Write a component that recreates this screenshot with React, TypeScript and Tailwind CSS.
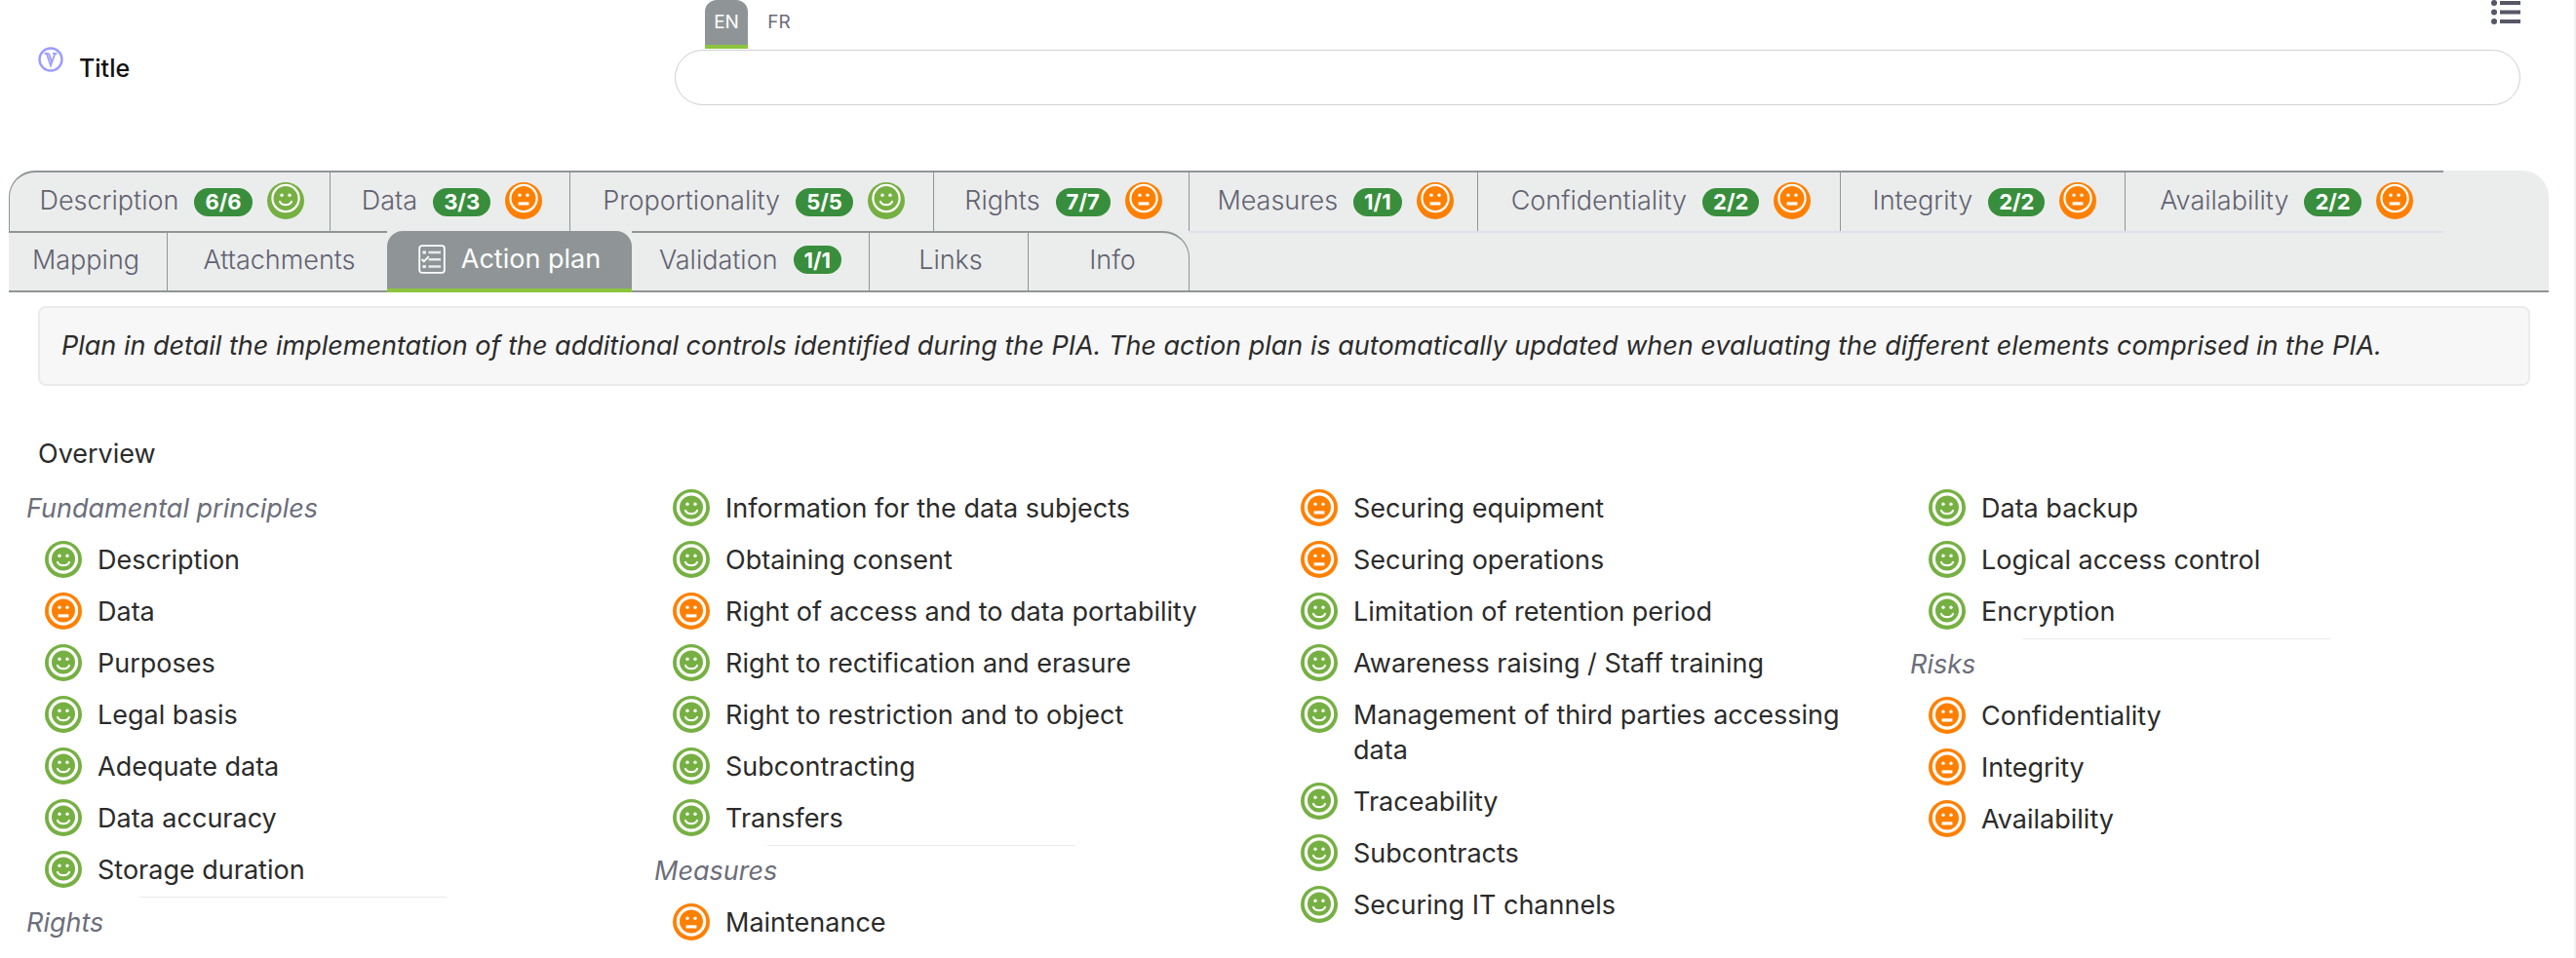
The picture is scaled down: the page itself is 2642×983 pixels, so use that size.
type Mood = "good" | "fair";

interface Tab {
  label: string;
  width: string;
  count?: string;
  mood?: Mood;
  edge?: string;
}

interface Entry {
  kind: "item" | "heading" | "rule";
  text?: string;
  mood?: Mood;
}

const good = (text: string): Entry => ({ kind: "item", text, mood: "good" });
const fair = (text: string): Entry => ({ kind: "item", text, mood: "fair" });
const heading = (text: string): Entry => ({ kind: "heading", text });
const rule: Entry = { kind: "rule" };

const firstRow: Tab[] = [
  { label: "Description", width: "w-[330px]", count: "6/6", mood: "good", edge: "rounded-tl-[27px] border-l" },
  { label: "Data", width: "w-[246px]", count: "3/3", mood: "fair" },
  { label: "Proportionality", width: "w-[373px]", count: "5/5", mood: "good" },
  { label: "Rights", width: "w-[262px]", count: "7/7", mood: "fair" },
  { label: "Measures", width: "w-[296px]", count: "1/1", mood: "fair" },
  { label: "Confidentiality", width: "w-[372px]", count: "2/2", mood: "fair" },
  { label: "Integrity", width: "w-[292px]", count: "2/2", mood: "fair" },
  { label: "Availability", width: "w-[326px]", count: "2/2", mood: "fair", edge: "border-r-0" },
];

const columns: Entry[][] = [
  [
    heading("Fundamental principles"),
    good("Description"),
    fair("Data"),
    good("Purposes"),
    good("Legal basis"),
    good("Adequate data"),
    good("Data accuracy"),
    good("Storage duration"),
    rule,
    heading("Rights"),
  ],
  [
    good("Information for the data subjects"),
    good("Obtaining consent"),
    fair("Right of access and to data portability"),
    good("Right to rectification and erasure"),
    good("Right to restriction and to object"),
    good("Subcontracting"),
    good("Transfers"),
    rule,
    heading("Measures"),
    fair("Maintenance"),
  ],
  [
    fair("Securing equipment"),
    fair("Securing operations"),
    good("Limitation of retention period"),
    good("Awareness raising / Staff training"),
    good("Management of third parties accessing data"),
    good("Traceability"),
    good("Subcontracts"),
    good("Securing IT channels"),
  ],
  [
    good("Data backup"),
    good("Logical access control"),
    good("Encryption"),
    rule,
    heading("Risks"),
    fair("Confidentiality"),
    fair("Integrity"),
    fair("Availability"),
  ],
];

function Face({ mood, thin = false }: { mood: Mood; thin?: boolean }) {
  const fill = mood === "good" ? "#76b043" : "#ff8000";
  const cy = thin ? 16.5 : 18.5;
  return (
    <svg viewBox="0 0 38 38" className="size-[38px] shrink-0" aria-hidden="true">
      <circle cx="19" cy="19" r="19" fill={fill} />
      <g transform={`translate(19 ${cy})`} fill="none" stroke="#fff">
        <circle r="13.6" strokeWidth={thin ? 2.2 : 3.2} />
        <circle cx="-4" cy="-3.2" r="1.7" fill="#fff" stroke="none" />
        <circle cx="4" cy="-3.2" r="1.7" fill="#fff" stroke="none" />
        {mood === "good" ? (
          <path d="M-6 3.4C-4 7.8 4 7.8 6 3.4" strokeWidth="2.2" strokeLinecap="round" />
        ) : (
          <path d="M-5.4 5.4H5.4" strokeWidth="3.2" />
        )}
      </g>
    </svg>
  );
}

function Count({ value }: { value: string }) {
  return (
    <span className="flex h-[29px] items-center rounded-full bg-[#388e3c] px-[11px] text-[22px] leading-none font-bold text-white">
      {value}
    </span>
  );
}

function TopTab({ tab }: { tab: Tab }) {
  return (
    <button
      type="button"
      role="tab"
      aria-selected={false}
      className={`flex h-[62px] items-center justify-center border-t-2 border-r border-[#909596] pl-1 ${tab.width} ${tab.edge ?? ""}`}
    >
      <span className="pb-[2px]">{tab.label}</span>
      {tab.count && (
        <span className="ml-4">
          <Count value={tab.count} />
        </span>
      )}
      {tab.mood && (
        <span className="ml-[15px] pb-[2px]">
          <Face mood={tab.mood} thin />
        </span>
      )}
    </button>
  );
}

const lowerTab = "flex h-[61px] items-center justify-center border-t-2 border-r border-[#909596] pb-1";

function ChecklistIcon() {
  return (
    <svg viewBox="0 0 28 30" className="h-[30px] w-7" fill="none" stroke="#fff" aria-hidden="true">
      <rect x="1.2" y="1.2" width="25.6" height="27.6" rx="2.5" strokeWidth="1.8" />
      <path d="M10.5 8H23M10.5 15.2H23M10.5 22.5H23" strokeWidth="2.6" strokeOpacity=".8" />
      <path d="M4.5 8h3.4M4.5 22.5h3.4" strokeWidth="3" strokeOpacity=".9" />
      <path d="M3.6 15l2.2 2.2 5-5" strokeWidth="1.8" />
    </svg>
  );
}

function ColumnEntry({ entry }: { entry: Entry }) {
  if (entry.kind === "rule") {
    return <li role="separator" className="ml-[18%] w-[49%] border-t border-[#e9eaeb]" />;
  }
  if (entry.kind === "heading") {
    return <li className="pt-2 pb-[9px] text-[#6c6e7a] italic">{entry.text}</li>;
  }
  return (
    <li className="flex items-start gap-4 pt-[6px] pr-6 pb-[9px] pl-[19px]">
      <span className="-mb-2">
        <Face mood={entry.mood ?? "good"} />
      </span>
      <span className="pt-[2px]">{entry.text}</span>
    </li>
  );
}

export default function App() {
  return (
    <div className="min-h-screen border-r-2 border-[#f0f0f0] bg-white font-['Inter',sans-serif] text-[27px] leading-9 text-[#2b2b2b]">
      <header className="flex items-start pl-[39px]">
        <label htmlFor="title" className="flex w-[653px] shrink-0 items-start gap-4 pt-12">
          <svg viewBox="0 0 26 26" className="size-[26px]" fill="none" stroke="#9c9cff" aria-hidden="true">
            <circle cx="13" cy="13" r="11.5" strokeWidth="2.4" />
            <path d="M6.5 6.8h4.6M15 6.8h4.6M8.8 7l4.2 12.2L17.4 7M11.2 7l3 9" strokeWidth="1.8" />
          </svg>
          <span className="pt-1 text-[25px] font-medium text-[#111]">Title</span>
        </label>
        <div className="mr-[55px] flex-1">
          <div className="flex h-[51px] items-start justify-between">
            <div role="tablist" className="flex pl-[31px] text-[19px]">
              <button
                type="button"
                role="tab"
                aria-selected="true"
                className="h-[50px] w-11 rounded-t-xl border-b-4 border-[#8bc53f] bg-[#8f9596] text-white"
              >
                EN
              </button>
              <button type="button" role="tab" aria-selected="false" className="h-[50px] w-16 pb-1 text-[#6b6b7b]">
                FR
              </button>
            </div>
            <button type="button" aria-label="List">
              <svg viewBox="0 0 30 26" className="h-[26px] w-[30px]" fill="none" stroke="#565766" aria-hidden="true">
                <path d="M9 3H30M9 12.5H30M9 22H30" strokeWidth="4" />
                <g fill="#565766" stroke="none">
                  <circle cx="3" cy="3" r="3" />
                  <circle cx="3" cy="12.5" r="3" />
                  <circle cx="3" cy="22" r="3" />
                </g>
              </svg>
            </button>
          </div>
          <input id="title" type="text" className="block h-[57px] w-full rounded-full border border-[#d0d0d0] px-6 outline-none" />
        </div>
      </header>

      <nav
        role="tablist"
        className="mt-[67px] mr-[26px] ml-[9px] rounded-t-[27px] border-b-2 border-[#909596] bg-[#ebedec] font-light text-[#626272]"
      >
        <div className="flex">
          {firstRow.map((tab) => (
            <TopTab key={tab.label} tab={tab} />
          ))}
        </div>
        <div className="flex">
          <button type="button" role="tab" className={`${lowerTab} w-[163px] pr-1`}>
            Mapping
          </button>
          <button type="button" role="tab" className={`${lowerTab} w-[225px] border-r-0 pl-1`}>
            Attachments
          </button>
          <button
            type="button"
            role="tab"
            aria-selected="true"
            className="-mb-[2px] flex w-[251px] items-center justify-center gap-4 rounded-t-2xl border-b-4 border-[#8bc53f] bg-[#8f9596] pb-[2px] font-normal text-white"
          >
            <ChecklistIcon />
            Action plan
          </button>
          <button type="button" role="tab" className={`${lowerTab} w-[244px] gap-4`}>
            Validation <Count value="1/1" />
          </button>
          <button type="button" role="tab" className={`${lowerTab} w-[163px] pl-1`}>
            Links
          </button>
          <button type="button" role="tab" className={`${lowerTab} w-[165px] rounded-tr-[27px] pl-2`}>
            Info
          </button>
          <div className="w-[1286px] border-t-2 border-[#e0e0ec]" />
        </div>
      </nav>

      <main>
        <p className="mt-[14px] mr-[45px] ml-[39px] rounded-lg border-2 border-[#ebebeb] bg-[#f7f7f7] px-[22px] py-[21px] italic">
          Plan in detail the implementation of the additional controls identified during the PIA. The action plan is
          automatically updated when evaluating the different elements comprised in the PIA.
        </p>
        <h2 className="mt-[52px] ml-[39px]">Overview</h2>
        <div className="mt-3 mr-[37px] ml-[27px] grid grid-cols-4">
          {columns.map((entries, c) => (
            <ul key={c}>
              {entries.map((entry, i) => (
                <ColumnEntry key={i} entry={entry} />
              ))}
            </ul>
          ))}
        </div>
      </main>
    </div>
  );
}
